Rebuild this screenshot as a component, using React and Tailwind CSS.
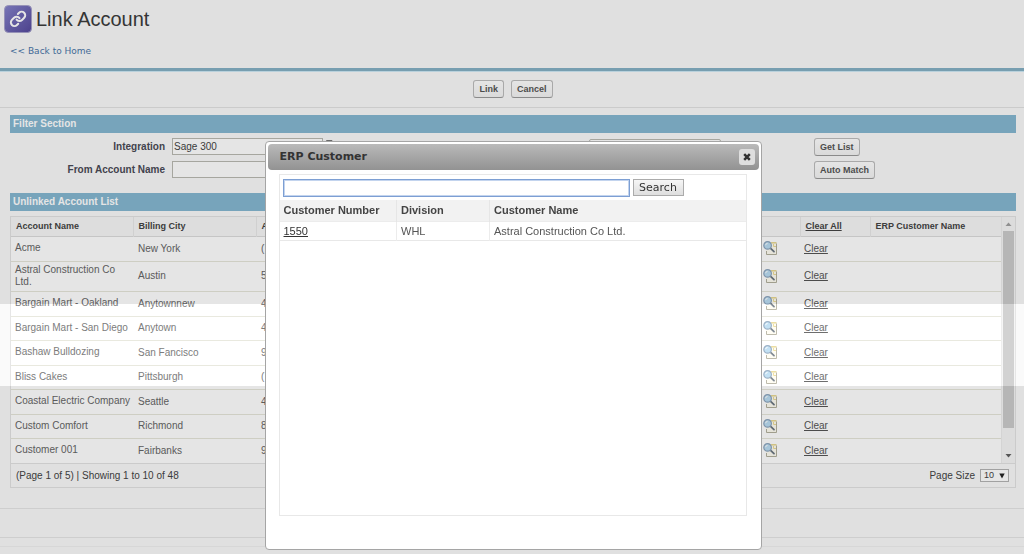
import React from "react";

const accounts = [
  { name: "Acme", city: "New York", phone: "(" },
  { name: "Astral Construction Co Ltd.", city: "Austin", phone: "5" },
  { name: "Bargain Mart - Oakland", city: "Anytownnew", phone: "4" },
  { name: "Bargain Mart - San Diego", city: "Anytown", phone: "4" },
  { name: "Bashaw Bulldozing", city: "San Fancisco", phone: "9" },
  { name: "Bliss Cakes", city: "Pittsburgh", phone: "(" },
  { name: "Coastal Electric Company", city: "Seattle", phone: "4" },
  { name: "Custom Comfort", city: "Richmond", phone: "8" },
  { name: "Customer 001", city: "Fairbanks", phone: "9" },
];

const customers = [
  { number: "1550", division: "WHL", name: "Astral Construction Co Ltd." },
];

function LinkLogo() {
  return (
    <svg className="w-7 h-7" viewBox="0 0 28 28" fill="none">
      <defs>
        <linearGradient id="logo" x1="0" y1="0" x2="1" y2="1">
          <stop offset="0" stopColor="#8583cb" />
          <stop offset="1" stopColor="#55499c" />
        </linearGradient>
      </defs>
      <rect x="0.5" y="0.5" width="27" height="27" rx="4" fill="url(#logo)" stroke="#a7a3cc" />
      <g transform="translate(5.4 5.2) scale(0.72)" stroke="#fff" strokeWidth="2.8" strokeLinecap="round" strokeLinejoin="round">
        <path d="M10 13a5 5 0 0 0 7.54.54l3-3a5 5 0 0 0-7.07-7.07l-1.72 1.71" />
        <path d="M14 11a5 5 0 0 0-7.54-.54l-3 3a5 5 0 0 0 7.07 7.07l1.71-1.71" />
      </g>
    </svg>
  );
}

function LookupIcon() {
  return (
    <svg className="block w-[15px] h-[15px]" viewBox="0 0 15 15" fill="none">
      <path d="M4 1.5h9.5v12H3.5V8z" fill="#fffdf2" />
      <path d="M8 1.8h5.5" stroke="#e6d588" strokeWidth="1.4" />
      <path d="M13.5 2.5v11H3.5V10" stroke="#b3b09e" />
      <path d="M10.5 3v2.5h2.5" stroke="#ecdc98" />
      <path d="M7.6 7.4l3.4 3.2" stroke="#6b7682" strokeWidth="1.8" strokeLinecap="round" />
      <circle cx="4.6" cy="4.4" r="3.8" fill="#b9dcf2" stroke="#8ea6be" strokeWidth="1.2" />
      <path d="M2.6 4.2a2.2 2.2 0 0 1 2-1.9" stroke="#fff" />
    </svg>
  );
}

function Button({ children }) {
  return (
    <button
      type="button"
      className="h-[18px] px-[5px] border border-[#bdbdbd] border-b-[#9a9a9a] rounded-[3px] bg-gradient-to-b from-white to-[#f3f3f3] text-[9px] leading-3 font-bold text-[#555]"
    >
      {children}
    </button>
  );
}

function SectionBar({ children }) {
  return (
    <h2 className="h-[18px] px-[3px] bg-[#85b7d1] text-white text-[10px] leading-[18px] font-bold">
      {children}
    </h2>
  );
}

function Scrollbar() {
  return (
    <div className="w-[14px] shrink-0 flex flex-col items-center bg-[#f5f5f5] border-l border-[#ececec]">
      <svg className="w-[7px] h-[14px] shrink-0" viewBox="0 0 7 14">
        <path d="M0.5 9L3.5 5.5L6.5 9z" fill="#a0a0a0" />
      </svg>
      <div className="w-[11px] h-[197px] bg-[#cbcbcb]" />
      <svg className="w-[7px] h-[14px] shrink-0 mt-auto" viewBox="0 0 7 14">
        <path d="M0.5 5L3.5 8.5L6.5 5z" fill="#606060" />
      </svg>
    </div>
  );
}

function FilterSection() {
  const label = "w-[155px] text-right text-[10px] leading-3 font-bold text-[#4a4a56]";
  const input = "ml-[7px] w-[151px] h-[17px] px-px border border-[#b9b9b1] bg-white text-[10px] text-[#444]";
  return (
    <div className="flex items-start pt-[5px] pb-[14px]">
      <div className="flex flex-col gap-[6px]">
        <div className="flex items-center">
          <label htmlFor="integration" className={label}>Integration</label>
          <input id="integration" defaultValue="Sage 300" className={input} />
          <svg className="w-[9px] h-4 ml-[2px]" viewBox="0 0 9 16" fill="none">
            <path d="M1.5 1.5h5.5v11h-5.5z" stroke="#777" />
          </svg>
        </div>
        <div className="flex items-center">
          <label htmlFor="from-name" className={label}>From Account Name</label>
          <input id="from-name" className={input} />
        </div>
      </div>
      <select aria-label="Match field" className="ml-auto mt-px w-[132px] h-[17px] border border-[#b9b9b1] rounded-[2px] bg-white" />
      <div className="flex flex-col items-start gap-[5px] ml-[93px] w-[202px]">
        <Button>Get List</Button>
        <Button>Auto Match</Button>
      </div>
    </div>
  );
}

function AccountTable() {
  const th = "px-[5px] border-r border-[#e8e8e8] font-bold";
  return (
    <div className="mt-[5px] border border-[#e2e2e2]">
      <div className="flex">
        <table className="flex-1 table-fixed w-full text-left">
          <colgroup>
            <col className="w-[122px]" />
            <col className="w-[123px]" />
            <col />
            <col className="w-[42px]" />
            <col className="w-[70px]" />
            <col className="w-[131px]" />
          </colgroup>
          <thead>
            <tr className="h-[19px] border-b border-[#dcdcdc] bg-[#f7f7f7] text-[9px] leading-3 text-[#444]">
              <th className={th}>Account Name</th>
              <th className={th}>Billing City</th>
              <th className={th}>A</th>
              <th className={th}></th>
              <th className={th}>
                <a href="#clear-all" className="underline">Clear All</a>
              </th>
              <th className="px-[5px] font-bold">ERP Customer Name</th>
            </tr>
          </thead>
          <tbody className="text-[10px] leading-3 text-[#666]">
            {accounts.map((account) => (
              <tr key={account.name} className="h-[25px] even:h-6 bg-white border-b border-[#e6e6da] last:border-0">
                <td className="pl-1 pr-[2px] pt-[2px] pb-[3px]">{account.name}</td>
                <td className="px-[5px]">{account.city}</td>
                <td className="px-[5px]">{account.phone}</td>
                <td className="px-[5px]">
                  <button type="button" aria-label="Find customer" className="block">
                    <LookupIcon />
                  </button>
                </td>
                <td className="px-1">
                  <a href="#clear" className="underline text-[#555]">Clear</a>
                </td>
                <td></td>
              </tr>
            ))}
          </tbody>
        </table>
        <Scrollbar />
      </div>
      <div className="flex items-center justify-between h-6 pl-[5px] pr-[6px] border-t border-[#e2e2e2] text-[10px] text-[#444]">
        <span>(Page 1 of 5) | Showing 1 to 10 of 48</span>
        <div className="flex items-center gap-[5px]">
          <label htmlFor="page-size">Page Size</label>
          <div className="relative flex">
            <select id="page-size" className="appearance-none w-[29px] h-[13px] pl-[3px] border border-[#b4b4b4] bg-white text-[9px] leading-[11px]">
              <option>10</option>
            </select>
            <svg className="absolute right-1 top-1 w-[6px] h-[6px] pointer-events-none" viewBox="0 0 6 6">
              <path d="M0.3 0.5h5.4L3 5.6z" fill="#222" />
            </svg>
          </div>
        </div>
      </div>
    </div>
  );
}

function CustomerDialog() {
  return (
    <div
      role="dialog"
      aria-label="ERP Customer"
      className="w-[497px] h-[409px] flex flex-col p-[2px] border border-[#a5a5a5] rounded-[4px] bg-white"
    >
      <div className="flex items-center justify-between h-[26px] pl-3 pr-1 rounded-[4px] bg-gradient-to-b from-[#bababa] to-[#929292]">
        <h2 className="font-['DejaVu_Sans',sans-serif] text-[11px] font-bold text-[#333]">ERP Customer</h2>
        <button type="button" aria-label="Close" className="w-4 h-4 flex items-center justify-center rounded-[3px] bg-[#dedede]">
          <svg className="w-2 h-2" viewBox="0 0 8 8">
            <path d="M1.2 1.2l5.6 5.6M6.8 1.2L1.2 6.8" stroke="#333" strokeWidth="2.5" />
          </svg>
        </button>
      </div>
      <div className="flex-1 mt-1 mb-[31px] ml-[11px] mr-3 border border-[#e8e8e8]">
        <form className="flex items-center gap-[3px] pl-[3px] h-[25px]">
          <input
            aria-label="Search customers"
            autoFocus
            className="flex-1 h-[18px] px-px border border-[#7d9fd3] outline-1 outline-[#c3d4ee] -outline-offset-2 bg-white text-[11px]"
          />
          <button
            type="button"
            className="w-[51px] h-[17px] mr-[62px] border border-[#ababab] bg-gradient-to-b from-[#f6f6f6] to-[#dedede] font-['DejaVu_Sans',sans-serif] text-[11px] leading-[14px] text-[#333]"
          >
            Search
          </button>
        </form>
        <table className="w-full table-fixed text-left text-[11px] leading-[14px] text-[#555]">
          <colgroup>
            <col className="w-[117px]" />
            <col className="w-[93px]" />
            <col />
          </colgroup>
          <thead>
            <tr className="h-[21px] bg-[#f2f2f2] border-b border-[#ececec] text-[#444]">
              <th className="px-1 border-r border-[#e6e6e6]">Customer Number</th>
              <th className="px-1 border-r border-[#e6e6e6]">Division</th>
              <th className="px-1">Customer Name</th>
            </tr>
          </thead>
          <tbody>
            {customers.map((customer) => (
              <tr key={customer.number} className="h-[19px] border-b border-[#e8e8e8]">
                <td className="px-1 border-r border-[#ececec]">
                  <a href="#customer" className="underline text-[#333]">{customer.number}</a>
                </td>
                <td className="px-1 border-r border-[#ececec]">{customer.division}</td>
                <td className="px-1">{customer.name}</td>
              </tr>
            ))}
          </tbody>
        </table>
      </div>
    </div>
  );
}

export default function App() {
  return (
    <div className="relative min-h-screen overflow-hidden bg-[#fafafa] font-['Liberation_Sans',Arial,sans-serif]">
      <header className="h-[68px] pt-[5px]">
        <div className="flex items-center gap-1 pl-1">
          <LinkLogo />
          <h1 className="text-[20px] leading-7 text-[#3c3c3c]">Link Account</h1>
        </div>
        <a
          href="#home"
          className="block w-fit mt-3 ml-[10px] font-['DejaVu_Sans',sans-serif] text-[9px] leading-3 text-[#4a76a8]"
        >
          &lt;&lt; Back to Home
        </a>
      </header>
      <div className="h-1 bg-[#85b0c4] border-b border-[#cfe9f5]" />

      {/* Page actions */}
      <div className="flex items-start justify-center gap-[7px] h-9 pt-2 pl-[2px] border-b border-[#e2e2e2]">
        <Button>Link</Button>
        <Button>Cancel</Button>
      </div>

      <main className="pl-[10px] pr-2 pt-[7px]">
        <SectionBar>Filter Section</SectionBar>
        <FilterSection />
        <SectionBar>Unlinked Account List</SectionBar>
        <AccountTable />
      </main>
      <footer className="mt-5">
        <div className="h-[30px] border-y border-[#e6e6e6]" />
        <div className="h-[9px] border-b border-[#f0f0f0]" />
      </footer>

      {/* Shade behind the dialog */}
      <div className="absolute inset-0 flex flex-col">
        <div className="h-[304px] bg-black/10" />
        <div className="h-[82px] bg-white/15" />
        <div className="flex-1 bg-black/10" />
      </div>
      <div className="absolute inset-x-0 top-[141px] flex justify-center pl-[2px]">
        <CustomerDialog />
      </div>
    </div>
  );
}
